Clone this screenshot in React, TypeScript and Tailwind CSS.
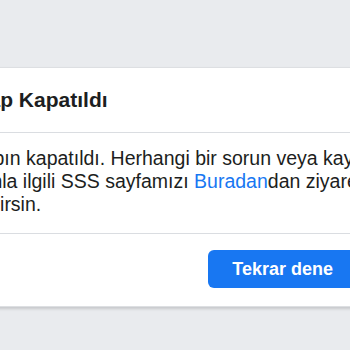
import React from 'react';

export default function App() {
  return (
    <div className="w-[350px] h-[350px] overflow-hidden bg-[#e9ebee] pt-[67px] font-['Liberation_Sans',Arial,sans-serif] text-[#1c1e21]">
      <div className="ml-[-69px] w-[443px] bg-white border border-[#dddfe2] rounded-lg shadow-[0_2px_3px_rgba(0,0,0,0.15)]">
        {/* Header */}
        <div className="h-[65px] flex items-center pl-[18px] pr-4 border-b border-[#dadde1]">
          <h2 className="text-[21px] font-bold whitespace-nowrap">Hesap Kapatıldı</h2>
        </div>

        {/* Body */}
        <div className="px-4 pt-[14px] pb-[17px] border-b border-[#dadde1] text-[19.5px] leading-[23px] whitespace-nowrap">
          Hesabın kapatıldı. Herhangi bir sorun veya kaygın varsa
          <br />
          bununla ilgili SSS sayfamızı <a href="#" className="text-[#1877f2]">Buradan</a>dan ziyaret
          <br />
          edebilirsin.
        </div>

        {/* Footer */}
        <div className="flex justify-end px-4 pt-[16px] pb-[18px]">
          <button className="h-[38px] px-[24px] rounded-md bg-[#1877f2] text-white text-[18px] font-bold whitespace-nowrap">
            Tekrar dene
          </button>
        </div>
      </div>
    </div>
  );
}
